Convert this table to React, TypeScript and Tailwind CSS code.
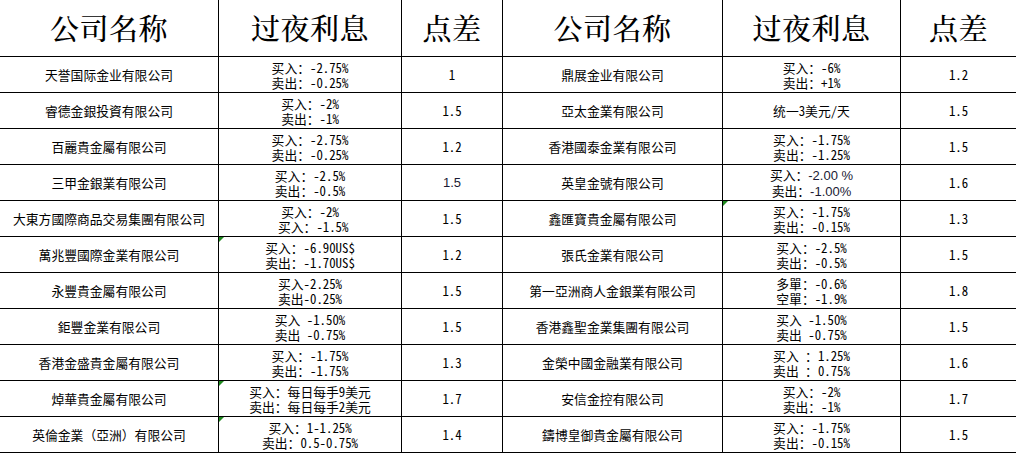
import React from "react";

type Row = { name: string; rate: React.ReactNode[]; spread: React.ReactNode; tri?: boolean };

const left: Row[] = [
  { name: "天誉国际金业有限公司", rate: ["买入：-2.75%", "卖出：-0.25%"], spread: "1" },
  { name: "睿德金銀投資有限公司", rate: ["买入：-2%", "卖出：-1%"], spread: "1.5" },
  { name: "百麗貴金屬有限公司", rate: ["买入：-2.75%", "卖出：-0.25%"], spread: "1.2" },
  {
    name: "三甲金銀業有限公司",
    rate: ["买入：-2.5%", "卖出：-0.5%"],
    spread: <span className="font-['Liberation_Sans',sans-serif] text-[13px] text-[#1a1a33]">1.5</span>,
  },
  { name: "大東方國際商品交易集團有限公司", rate: ["买入：-2%", " 买入：-1.5%"], spread: "1.5" },
  { name: "萬兆豐國際金業有限公司", rate: ["买入：-6.90US$", "卖出：-1.70US$"], spread: "1.2", tri: true },
  { name: "永豐貴金屬有限公司", rate: ["买入-2.25%", "卖出-0.25%"], spread: "1.5" },
  { name: "鉅豐金業有限公司", rate: ["买入 -1.50%", "卖出 -0.75%"], spread: "1.5" },
  { name: "香港金盛貴金屬有限公司", rate: ["买入：-1.75%", "卖出：-1.75%"], spread: "1.3" },
  { name: "焯華貴金屬有限公司", rate: ["买入：每日每手9美元", "卖出：每日每手2美元"], spread: "1.7", tri: true },
  { name: "英倫金業（亞洲）有限公司", rate: ["买入：1-1.25%", "卖出：0.5-0.75%"], spread: "1.4", tri: true },
];

const right: Row[] = [
  { name: "鼎展金业有限公司", rate: ["买入：-6%", "卖出：+1%"], spread: "1.2" },
  { name: "亞太金業有限公司", rate: ["统一3美元/天"], spread: "1.5" },
  { name: "香港國泰金業有限公司", rate: ["买入：-1.75%", "卖出：-1.25%"], spread: "1.5" },
  {
    name: "英皇金號有限公司",
    rate: [
      <>
        买入：<span className="font-['Liberation_Sans',sans-serif] text-[13px] text-[#1a1a33]">-2.00 %</span>
      </>,
      <>
        卖出：<span className="font-['Liberation_Sans',sans-serif] text-[13px] text-[#1a1a33]">-1.00%</span>
      </>,
    ],
    spread: "1.6",
  },
  { name: "鑫匯寶貴金屬有限公司", rate: ["买入：-1.75%", "卖出：-0.15%"], spread: "1.3", tri: true },
  { name: "張氏金業有限公司", rate: ["买入：-2.5%", "卖出：-0.5%"], spread: "1.5" },
  { name: "第一亞洲商人金銀業有限公司", rate: ["多單：-0.6%", "空單：-1.9%"], spread: "1.8" },
  { name: "香港鑫聖金業集團有限公司", rate: ["买入 -1.50%", "卖出 -0.75%"], spread: "1.5" },
  { name: "金榮中國金融業有限公司", rate: ["买入 ：1.25%", "卖出 ：0.75%"], spread: "1.6" },
  { name: "安信金控有限公司", rate: ["买入：-2%", "卖出：-1%"], spread: "1.7" },
  { name: "鑄博皇御貴金屬有限公司", rate: ["买入：-1.75%", "卖出：-0.15%"], spread: "1.5" },
];

const cell =
  "relative flex items-center justify-center border-r border-b border-black text-center whitespace-pre";

function Tri() {
  return (
    <span className="absolute left-0 top-0 h-0 w-0 border-t-[5px] border-r-[5px] border-t-[#1f8a1f] border-r-transparent" />
  );
}

function Header() {
  return (
    <>
      {["公司名称", "过夜利息", "点差", "公司名称", "过夜利息", "点差"].map((t, i) => (
        <div
          key={i}
          className={`${cell} font-['Noto_Serif_CJK_SC','Noto_Sans_CJK_SC',serif] text-[29px] font-medium tracking-[0.5px] text-black`}
        >
          {t}
        </div>
      ))}
    </>
  );
}

function Cells({ row }: { row: Row }) {
  return (
    <>
      <div className={cell}>{row.name}</div>
      <div className={`${cell} flex-col leading-[15px]`}>
        {row.tri && <Tri />}
        {row.rate.map((r, i) => (
          <div key={i}>{r}</div>
        ))}
      </div>
      <div className={cell}>{row.spread}</div>
    </>
  );
}

export default function App() {
  return (
    <div className="h-[453px] w-[1016px] overflow-hidden bg-white">
      <div className="grid w-[1017px] grid-cols-[219px_183px_101px_220px_178px_116px] grid-rows-[57px_repeat(11,36px)] font-['Noto_Sans_Mono_CJK_SC','Noto_Sans_CJK_SC',monospace] text-[12.8px] text-black">
        <Header />
        {left.map((l, i) => (
          <React.Fragment key={i}>
            <Cells row={l} />
            <Cells row={right[i]} />
          </React.Fragment>
        ))}
      </div>
    </div>
  );
}
